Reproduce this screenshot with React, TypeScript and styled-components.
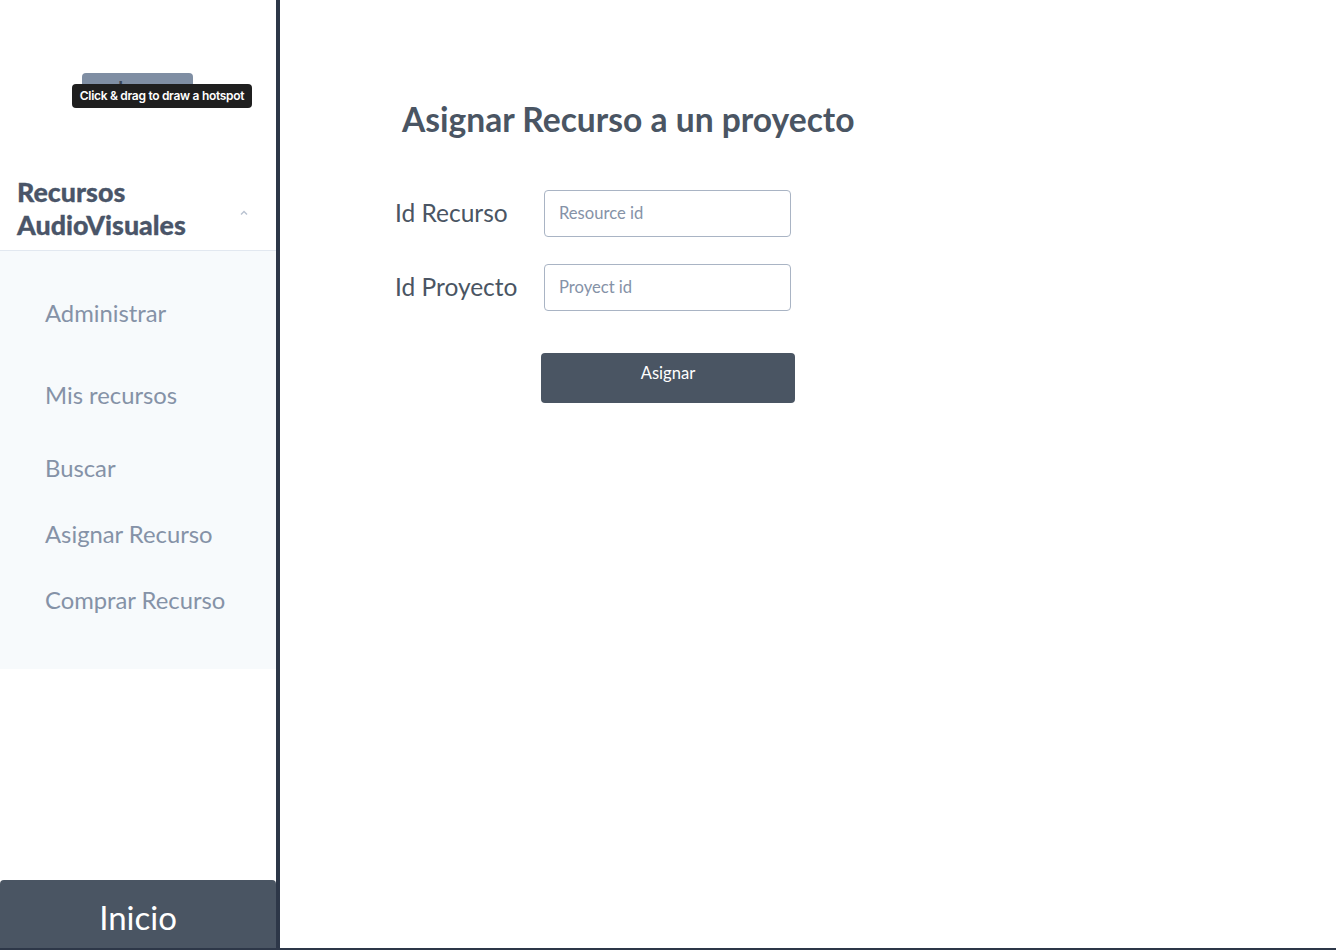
import React from "react";
import styled, { createGlobalStyle } from "styled-components";

const Global = createGlobalStyle`
  html, body { margin: 0; padding: 0; background: #fff; }
  body { font-family: Lato, "Open Sans", sans-serif; }
  * { box-sizing: border-box; }
`;

const Page = styled.div`
  display: flex;
  width: 1336px;
  height: 950px;
  border-bottom: 2px solid #2d3748;
  overflow: hidden;
`;

const Sidebar = styled.aside`
  width: 280px;
  flex: none;
  display: flex;
  flex-direction: column;
  border-right: 4px solid #2d3748;
  background: #fff;
`;

const LogoArea = styled.div`
  height: 176px;
  position: relative;
  display: flex;
  justify-content: flex-start;
  padding: 73px 0 0 82px;
`;

const LogoBox = styled.div`
  width: 111px;
  height: 34px;
  border-radius: 4px;
  background: #7f8ea3;
  color: #3a4556;
  font-size: 18px;
  font-weight: 700;
  text-align: center;
  line-height: 30px;
`;

const Tooltip = styled.div`
  position: absolute;
  left: 72px;
  top: 84px;
  width: 180px;
  height: 24px;
  border-radius: 4px;
  background: #1f1f1f;
  color: #fff;
  font-family: Inter, "Liberation Sans", sans-serif;
  font-size: 12px;
  font-weight: 600;
  letter-spacing: -0.3px;
  line-height: 24px;
  text-align: center;
`;

const SectionHeader = styled.div`
  display: flex;
  align-items: center;
  justify-content: space-between;
  padding: 0 26px 8px 17px;
  border-bottom: 1px solid #e2e8f0;
`;

const SectionTitle = styled.h2`
  margin: 0;
  font-size: 26.8px;
  font-weight: 900;
  line-height: 33px;
  color: #4a5568;
  -webkit-text-stroke: 0.3px #4a5568;
`;

const Chevron = styled.svg`
  width: 12px;
  height: 12px;
  margin-top: 8px;
`;

const Menu = styled.nav`
  background: #f7fafc;
  height: 418px;
  display: flex;
  flex-direction: column;
  padding-top: 47px;
`;

const MenuItem = styled.a<{ $gap: number }>`
  display: block;
  margin-top: ${(p) => p.$gap}px;
  padding-left: 45px;
  font-size: 23.8px;
  line-height: 30px;
  color: #8592a7;
  text-decoration: none;
`;

const Spacer = styled.div`
  flex: 1;
`;

const HomeButton = styled.button`
  height: 68px;
  width: 100%;
  border: none;
  border-radius: 4px 4px 0 0;
  background: #4a5563;
  color: #fff;
  font-family: Lato, sans-serif;
  font-size: 33px;
  padding: 6px 0 0;
`;

const Main = styled.main`
  flex: 1;
  padding: 97px 0 0 115px;
  display: flex;
  flex-direction: column;
  align-items: flex-start;
`;

const Title = styled.h1`
  margin: 0 0 49px 7px;
  font-size: 33.6px;
  line-height: 44px;
  font-weight: 700;
  color: #4a5563;
`;

const Form = styled.form`
  display: grid;
  grid-template-columns: 149px 247px;
  row-gap: 27px;
  align-items: center;
`;

const Label = styled.label`
  font-size: 24.5px;
  color: #4a5563;
  line-height: 30px;
  margin-top: -2px;
`;

const Input = styled.input`
  height: 47px;
  width: 247px;
  border: 1px solid #a9b4c4;
  border-radius: 4px;
  padding: 0 14px 2px;
  font-family: Lato, sans-serif;
  font-size: 16.6px;
  color: #4a5563;
  outline: none;
  &::placeholder { color: #8592a7; }
`;

const SubmitButton = styled.button`
  grid-column: 2;
  margin: 15px 0 0 -3px;
  width: 254px;
  height: 50px;
  border: none;
  border-radius: 4px;
  background: #4a5563;
  color: #fff;
  font-family: Lato, sans-serif;
  font-size: 16.6px;
  padding: 0 0 11px;
`;

const items = [
  { label: "Administrar", gap: 0 },
  { label: "Mis recursos", gap: 52 },
  { label: "Buscar", gap: 43 },
  { label: "Asignar Recurso", gap: 36 },
  { label: "Comprar Recurso", gap: 36 },
];

export default function App() {
  return (
    <>
      <Global />
      <Page>
        <Sidebar>
          <LogoArea>
            <LogoBox>Logo</LogoBox>
            <Tooltip>Click &amp; drag to draw a hotspot</Tooltip>
          </LogoArea>
          <SectionHeader>
            <SectionTitle>
              Recursos
              <br />
              AudioVisuales
            </SectionTitle>
            <Chevron viewBox="0 0 12 12" fill="none" stroke="#b8c2d0" strokeWidth="1.4">
              <path d="M3 7.5 L6 4.5 L9 7.5" />
            </Chevron>
          </SectionHeader>
          <Menu>
            {items.map((it) => (
              <MenuItem key={it.label} href="#" $gap={it.gap}>
                {it.label}
              </MenuItem>
            ))}
          </Menu>
          <Spacer />
          <HomeButton>Inicio</HomeButton>
        </Sidebar>
        <Main>
          <Title>Asignar Recurso a un proyecto</Title>
          <Form onSubmit={(e) => e.preventDefault()}>
            <Label>Id Recurso</Label>
            <Input placeholder="Resource id" />
            <Label>Id Proyecto</Label>
            <Input placeholder="Proyect id" />
            <SubmitButton type="submit">Asignar</SubmitButton>
          </Form>
        </Main>
      </Page>
    </>
  );
}
